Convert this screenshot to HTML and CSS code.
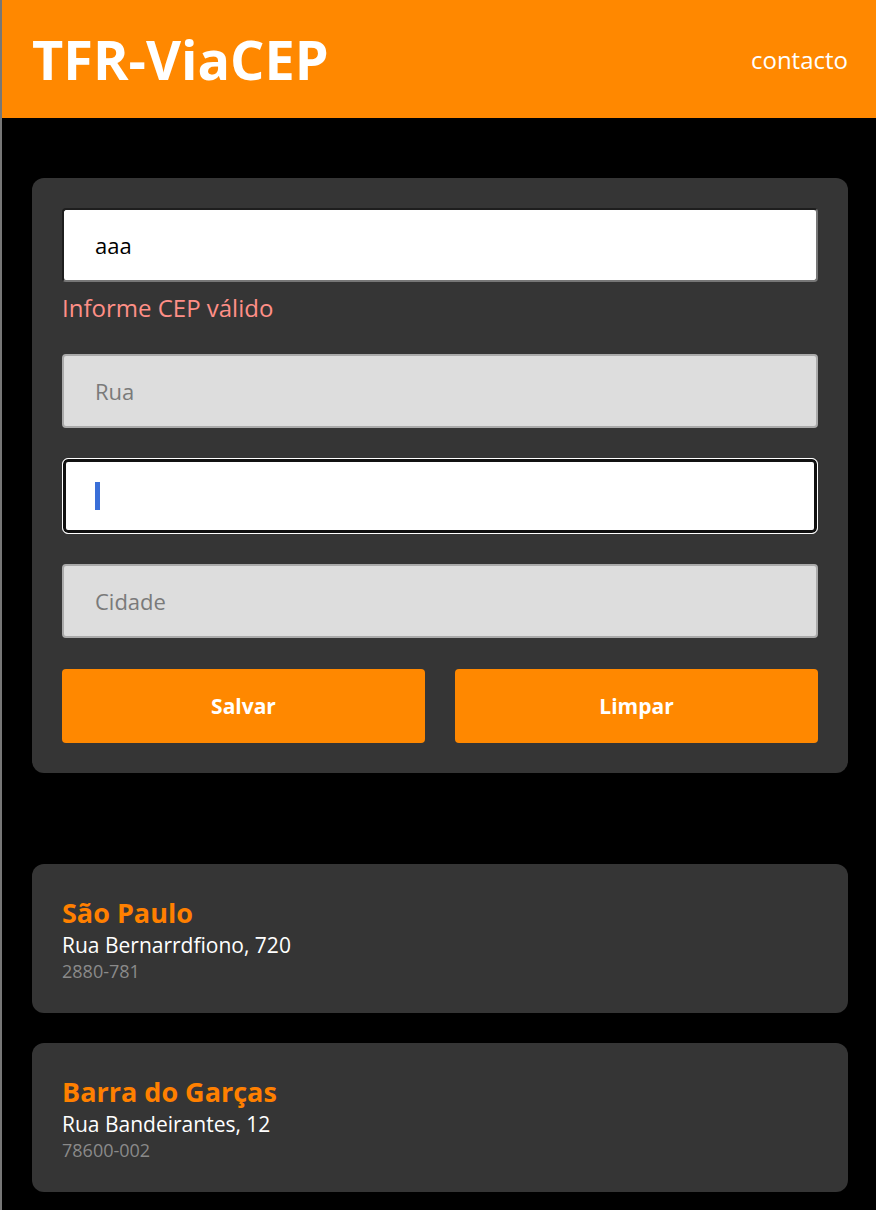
FILE: index.html
```html
<!DOCTYPE html>
<html lang="pt">
<head>
<meta charset="utf-8">
<title>TFR-ViaCEP</title>
<link rel="stylesheet" href="styles.css">
</head>
<body>
<header class="topbar">
  <h1 class="brand">TFR-ViaCEP</h1>
  <a class="nav-link" href="#">contacto</a>
</header>
<main class="content">
  <form class="panel">
    <div class="field">
      <input class="input input-cep" type="text" value="aaa">
      <p class="error">Informe CEP válido</p>
    </div>
    <input class="input input-disabled" type="text" placeholder="Rua" disabled>
    <div class="field field-focus">
      <input class="input input-focus" type="text">
      <span class="caret"></span>
    </div>
    <input class="input input-disabled" type="text" placeholder="Cidade" disabled>
    <div class="actions">
      <button class="btn" type="button">Salvar</button>
      <button class="btn" type="button">Limpar</button>
    </div>
  </form>
  <section class="list">
    <article class="card">
      <h2 class="card-title">São Paulo</h2>
      <p class="card-street">Rua Bernarrdfiono, 720</p>
      <p class="card-cep">2880-781</p>
    </article>
    <article class="card">
      <h2 class="card-title">Barra do Garças</h2>
      <p class="card-street">Rua Bandeirantes, 12</p>
      <p class="card-cep">78600-002</p>
    </article>
  </section>
</main>
</body>
</html>
```
FILE: styles.css
```css
* { box-sizing: border-box; }
html, body { margin: 0; padding: 0; }
body {
  background: #000;
  border-left: 2px solid #777;
  font-family: "Open Sans", "Noto Sans", sans-serif;
  min-height: 1210px;
}
.topbar {
  background: #ff8800;
  height: 118px;
  display: flex;
  align-items: center;
  justify-content: space-between;
  padding: 0 28px 0 30px;
}
.brand {
  margin: 0;
  color: #fff;
  font-size: 54px;
  font-weight: 700;
  line-height: 74px;
}
.nav-link {
  color: #fff;
  font-size: 24px;
  text-decoration: none;
}
.content {
  padding: 60px 28px 0 30px;
}
.panel {
  background: #353535;
  border-radius: 12px;
  padding: 30px;
  display: flex;
  flex-direction: column;
  gap: 30px;
}
.field { position: relative; }
.input {
  display: block;
  width: 100%;
  height: 74px;
  border-radius: 4px;
  border: 2px solid #aaa;
  padding: 0 31px;
  font-family: "Open Sans", "Noto Sans", sans-serif;
  font-size: 22px;
  color: #000;
  background: #fff;
  outline: none;
}
.input::placeholder { color: #7a7a7a; }
.input-cep {
  border-color: #1e1e1e #777 #777 #1e1e1e;
}
.input-disabled {
  background: #dddddd;
  border-color: #aaa;
}
.input-focus {
  height: 76px;
  border: 1px solid #fff;
  border-radius: 6px;
  box-shadow: inset 0 0 0 3px #111;
}
.caret {
  position: absolute;
  left: 33px;
  top: 24px;
  width: 5px;
  height: 28px;
  background: #3a6fd8;
}
.error {
  margin: 10px 0 0;
  color: #ff8f87;
  font-size: 24px;
  line-height: 32px;
}
.actions {
  margin-top: 1px;
  display: grid;
  grid-template-columns: 1fr 1fr;
  gap: 30px;
}
.btn {
  height: 74px;
  border: none;
  border-radius: 4px;
  background: #ff8800;
  color: #fff;
  font-family: "Open Sans", "Noto Sans", sans-serif;
  font-size: 21px;
  font-weight: 700;
}
.list {
  margin-top: 91px;
  display: flex;
  flex-direction: column;
  gap: 30px;
  padding-bottom: 20px;
}
.card {
  background: #353535;
  border-radius: 12px;
  padding: 30px;
}
.card-title {
  margin: 0;
  color: #ff8000;
  font-size: 27px;
  font-weight: 700;
  line-height: 37px;
}
.card-street {
  margin: 0;
  color: #fff;
  font-size: 21px;
  line-height: 28px;
}
.card-cep {
  margin: 0;
  color: #8a8a8a;
  font-size: 18px;
  line-height: 24px;
}
```
